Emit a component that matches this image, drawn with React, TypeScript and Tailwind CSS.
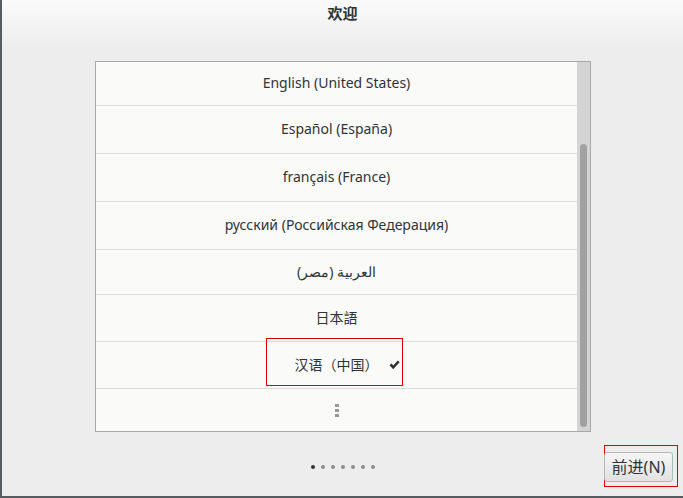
import React from 'react';

const FONT = { fontFamily: '"Noto Sans", "Noto Sans CJK SC", sans-serif' };

const languages = [
  { label: 'Español (España)', h: 'h-[48px]' },
  { label: 'français (France)', h: 'h-[48px]' },
  { label: 'русский (Российская Федерация)', h: 'h-[48px]' },
  { label: 'العربية (مصر)', h: 'h-[45px]' },
  { label: '日本語', h: 'h-[47px]' },
];

function CheckMark() {
  return (
    <svg width="11" height="10" viewBox="0 0 11 10" className="ml-[10px] mt-[2px]">
      <path d="M0.5 5.2 L2.6 3.4 L4.2 5.4 L8.9 0.6 L10.6 2.2 L4.2 9.2 Z" fill="#2e3436" />
    </svg>
  );
}

export default function App() {
  return (
    <div
      className="w-[683px] h-[498px] overflow-hidden border-l-2 border-b-2 border-[#565c5f] bg-[linear-gradient(to_bottom,#fafafa_0px,#ededed_48px)] text-[#2e3436]"
      style={FONT}
    >
      {/* Titulo */}
      <div className="h-[27px] flex items-center justify-center text-[15px] font-bold">欢迎</div>

      {/* Lista de idiomas */}
      <div className="mt-[34px] ml-[93px] w-[496px] h-[371px] flex border border-[#a8a8a8] bg-[#fafaf9]">
        <div className="flex-1 flex flex-col text-[14px]">
          <div className="h-[44px] shrink-0 flex items-center justify-center pb-[3px] border-b border-[#dcdcdc]">
            English (United States)
          </div>
          {languages.map((l) => (
            <div key={l.label} className={`${l.h} shrink-0 flex items-center justify-center pb-[2px] border-b border-[#dcdcdc]`}>
              {l.label}
            </div>
          ))}
          <div className="relative h-[47px] shrink-0 flex items-center justify-center pb-[2px] border-b border-[#dcdcdc]">
            <span className="ml-[21px]">汉语（中国）</span>
            <CheckMark />
            <div className="absolute left-[170px] top-[-4px] w-[137px] h-[48px] border border-[#e00000]" />
          </div>
          <div className="flex-1 flex flex-col items-center justify-center gap-[2px]">
            <span className="w-[4px] h-[3px] bg-[#999]" />
            <span className="w-[4px] h-[3px] bg-[#999]" />
            <span className="w-[4px] h-[3px] bg-[#999]" />
          </div>
        </div>
        {/* Barra de desplazamiento */}
        <div className="w-[13px] bg-[#d4d4d4] flex justify-center pt-[82px] pb-[4px]">
          <div className="w-[7px] h-full rounded-full bg-[#a1a1a1]" />
        </div>
      </div>

      {/* Pie */}
      <div className="mt-[13px] h-[42px] grid grid-cols-[1fr_auto_1fr] items-center">
        <div />
        <div className="flex items-center gap-[6px] pt-[1px]">
          <span className="w-[4px] h-[4px] rounded-full bg-[#2e3436]" />
          {[0, 1, 2, 3, 4, 5].map((i) => (
            <span key={i} className="w-[4px] h-[4px] rounded-full bg-[#8c8c8c]" />
          ))}
        </div>
        <div className="flex justify-end pr-[5px]">
          <div className="w-[74px] h-[42px] border border-[#e00000] pt-[6px] pr-[4px] pb-[4px]">
            <button className="w-[69px] h-[30px] -ml-[1px] rounded-[3px] border border-[#b6b6b6] bg-[linear-gradient(to_bottom,#f6f6f6,#e1e1e1)] text-[16px] text-[#2e3436] leading-none">
              前进(N)
            </button>
          </div>
        </div>
      </div>
    </div>
  );
}
